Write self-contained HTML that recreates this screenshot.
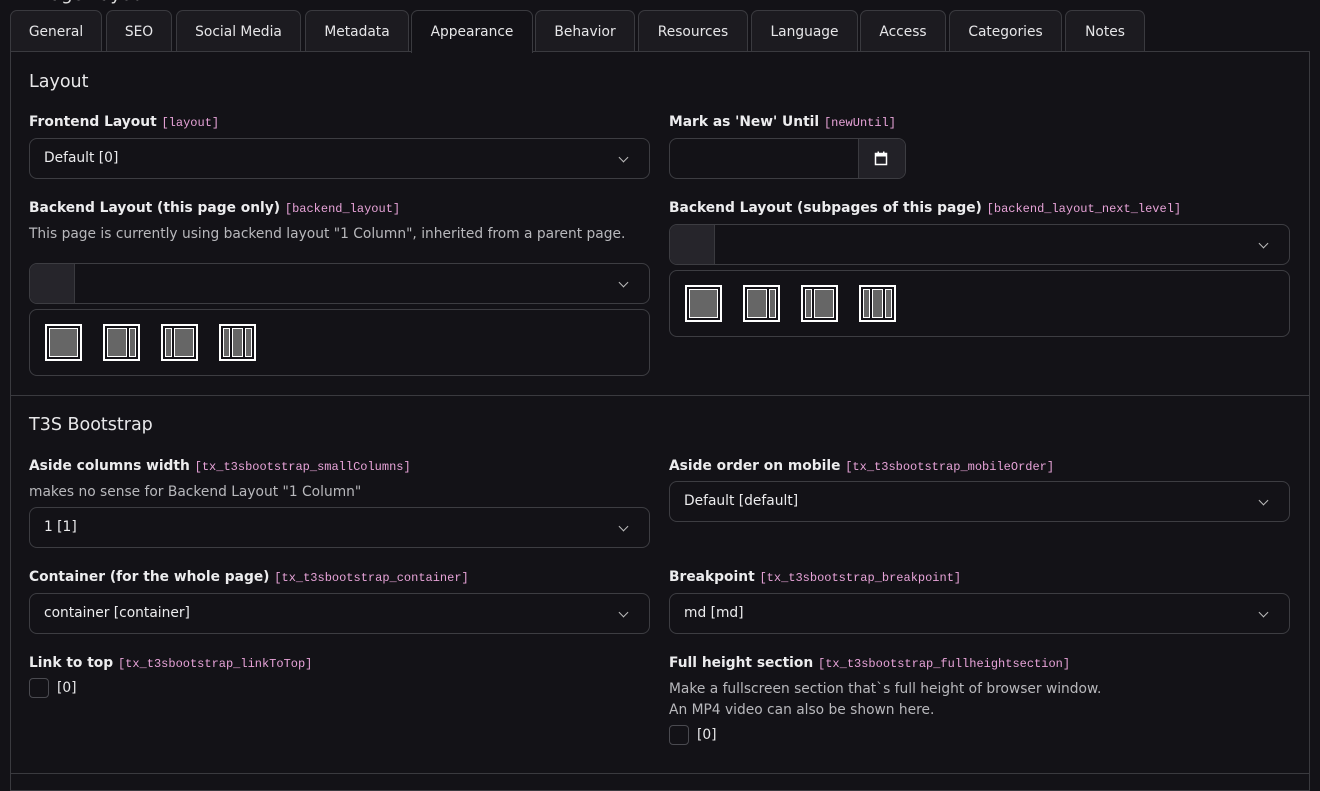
<!DOCTYPE html>
<html><head><meta charset="utf-8"><style>
*{box-sizing:border-box;margin:0;padding:0}
body{width:1320px;height:778px;background:#131217;color:#e8e8ea;font-family:"DejaVu Sans","Liberation Sans",sans-serif;font-size:13.5px;position:relative;overflow:hidden}
.a{position:absolute}
.tab{position:absolute;top:10px;height:42px;background:#1c1b20;border:1px solid #3a3a3f;border-bottom:none;border-radius:7px 7px 0 0;text-align:center;line-height:42px;font-size:13.8px;color:#e6e6e8;white-space:nowrap}
.tab.act{background:#131217;height:43px;z-index:2}
.panel{position:absolute;left:10px;top:51px;width:1300px;height:740px;border:1px solid #3a3a3f}
h2{position:absolute;font-weight:normal;font-size:17.5px;color:#e8e8ea}
.lbl{position:absolute;font-weight:bold;font-size:13.8px;color:#ececee;white-space:nowrap}
.lbl code{font-family:"Liberation Mono",monospace;font-weight:normal;font-size:12px;color:#e7a3d8}
.desc{position:absolute;font-size:13.8px;color:#b8b8bc;white-space:nowrap}
.sel{position:absolute;height:41px;border:1px solid #3d3d42;border-radius:8px;background:#131217;line-height:39px;padding-left:14px;font-size:13.8px;color:#ececee;white-space:nowrap}
.sel:after{content:"";position:absolute;right:22px;top:15px;width:6px;height:6px;border-right:1px solid #bbb;border-bottom:1px solid #bbb;transform:rotate(45deg)}
.sw{position:absolute;left:0;top:0;width:45px;height:39px;background:#26252b;border-right:1px solid #3a3a3f;border-radius:7px 0 0 7px}
.box{position:absolute;height:67px;border:1px solid #3d3d42;border-radius:8px}
.th{position:absolute;top:14px;width:37px;height:37px;border:2px solid #fff;background:#131217;padding:2px;display:flex;gap:2px}
.th i{display:block;background:#666;border:1px solid #fff;flex:1}
.th i.n{flex:0 0 7px}
.hr{position:absolute;left:11px;width:1298px;height:1px;background:#3a3a3f}
.cb{position:absolute;width:20px;height:20px;border:1px solid #4a4a50;border-radius:4px}
</style></head><body>
<div class="a" style="left:40px;top:-16px;font-size:18px;color:#ddd">Page Layout</div>
<div class="tab" style="left:10px;width:92px">General</div>
<div class="tab" style="left:106px;width:66px">SEO</div>
<div class="tab" style="left:176px;width:125px">Social Media</div>
<div class="tab" style="left:305px;width:104px">Metadata</div>
<div class="tab act" style="left:411px;width:122px">Appearance</div>
<div class="tab" style="left:535px;width:100px">Behavior</div>
<div class="tab" style="left:638px;width:110px">Resources</div>
<div class="tab" style="left:751px;width:107px">Language</div>
<div class="tab" style="left:860px;width:86px">Access</div>
<div class="tab" style="left:949px;width:113px">Categories</div>
<div class="tab" style="left:1065px;width:80px">Notes</div>
<div class="panel"></div>

<h2 style="left:29px;top:72px">Layout</h2>
<div class="lbl" style="left:29px;top:114px">Frontend Layout <code>[layout]</code></div>
<div class="sel" style="left:29px;top:138px;width:621px">Default [0]</div>
<div class="lbl" style="left:669px;top:114px">Mark as 'New' Until <code>[newUntil]</code></div>
<div class="a" style="left:669px;top:138px;width:237px;height:41px;border:1px solid #3d3d42;border-radius:8px;overflow:hidden"><div class="a" style="left:188px;top:0;width:48px;height:39px;background:#222127;border-left:1px solid #3a3a3f"></div>
<svg class="a" style="left:204px;top:12px" width="14" height="15" viewBox="0 0 14 15"><rect x="1.5" y="2.5" width="11" height="11" fill="none" stroke="#fff" stroke-width="1.5"/><rect x="1.5" y="2.5" width="11" height="3" fill="#fff"/><rect x="3.5" y="0.5" width="1.5" height="3" fill="#fff"/><rect x="9" y="0.5" width="1.5" height="3" fill="#fff"/></svg></div>

<div class="lbl" style="left:29px;top:200px">Backend Layout (this page only) <code>[backend_layout]</code></div>
<div class="desc" style="left:29px;top:226px">This page is currently using backend layout "1 Column", inherited from a parent page.</div>
<div class="sel" style="left:29px;top:263px;width:621px"><div class="sw"></div></div>
<div class="box" style="left:29px;top:309px;width:621px">
<div class="th" style="left:15px"><i></i></div>
<div class="th" style="left:73px"><i></i><i class="n"></i></div>
<div class="th" style="left:131px"><i class="n"></i><i></i></div>
<div class="th" style="left:189px"><i class="n"></i><i></i><i class="n"></i></div>
</div>
<div class="lbl" style="left:669px;top:200px">Backend Layout (subpages of this page) <code>[backend_layout_next_level]</code></div>
<div class="sel" style="left:669px;top:224px;width:621px"><div class="sw"></div></div>
<div class="box" style="left:669px;top:270px;width:621px">
<div class="th" style="left:15px"><i></i></div>
<div class="th" style="left:73px"><i></i><i class="n"></i></div>
<div class="th" style="left:131px"><i class="n"></i><i></i></div>
<div class="th" style="left:189px"><i class="n"></i><i></i><i class="n"></i></div>
</div>

<div class="hr" style="top:395px"></div>
<h2 style="left:29px;top:415px">T3S Bootstrap</h2>
<div class="lbl" style="left:29px;top:458px">Aside columns width <code>[tx_t3sbootstrap_smallColumns]</code></div>
<div class="desc" style="left:29px;top:484px">makes no sense for Backend Layout "1 Column"</div>
<div class="sel" style="left:29px;top:507px;width:621px">1 [1]</div>
<div class="lbl" style="left:669px;top:458px">Aside order on mobile <code>[tx_t3sbootstrap_mobileOrder]</code></div>
<div class="sel" style="left:669px;top:481px;width:621px">Default [default]</div>

<div class="lbl" style="left:29px;top:569px">Container (for the whole page) <code>[tx_t3sbootstrap_container]</code></div>
<div class="sel" style="left:29px;top:593px;width:621px">container [container]</div>
<div class="lbl" style="left:669px;top:569px">Breakpoint <code>[tx_t3sbootstrap_breakpoint]</code></div>
<div class="sel" style="left:669px;top:593px;width:621px">md [md]</div>

<div class="lbl" style="left:29px;top:655px">Link to top <code>[tx_t3sbootstrap_linkToTop]</code></div>
<div class="cb" style="left:29px;top:678px"></div>
<div class="a" style="left:57px;top:680px;font-size:13.8px">[0]</div>
<div class="lbl" style="left:669px;top:655px">Full height section <code>[tx_t3sbootstrap_fullheightsection]</code></div>
<div class="desc" style="left:669px;top:681px">Make a fullscreen section that`s full height of browser window.</div>
<div class="desc" style="left:669px;top:702px">An MP4 video can also be shown here.</div>
<div class="cb" style="left:669px;top:725px"></div>
<div class="a" style="left:697px;top:727px;font-size:13.8px">[0]</div>
<div class="hr" style="top:773px"></div>
</body></html>
